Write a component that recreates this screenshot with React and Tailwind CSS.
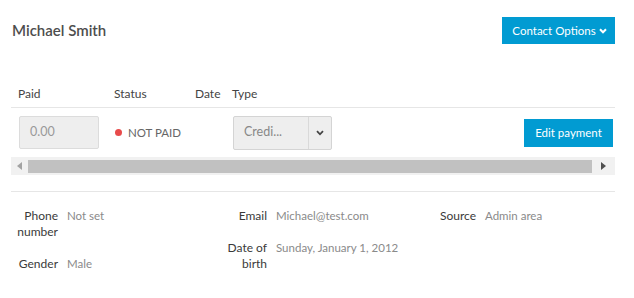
import React from 'react';

const font = { fontFamily: 'Lato, "Open Sans", sans-serif' };

function Detail({ label, value }) {
  return (
    <div className="flex mb-4 leading-4">
      <div className="w-[47px] shrink-0 text-right text-[12px] text-[#3a3a3a]">{label}</div>
      <div className="ml-[9px] text-[11.5px] text-[#8a8a8a]">{value}</div>
    </div>
  );
}

export default function App() {
  return (
    <div className="w-[634px] h-[298px] bg-white overflow-hidden pl-[11px] pr-[19px] pt-[17px]" style={font}>
      {/* header */}
      <div className="flex items-center justify-between h-[27px]">
        <h1 className="pl-[1px] text-[15px] font-semibold text-[#4d4d4d]">Michael Smith</h1>
        <button className="w-[113px] h-[27px] bg-[#019bd2] text-white text-[11.5px] flex items-center justify-center gap-[3px] pl-[2px]">
          Contact Options
          <svg width="8" height="6" viewBox="0 0 8 6"><path d="M1 1.2 L4 4.3 L7 1.2" stroke="white" strokeWidth="2" fill="none" /></svg>
        </button>
      </div>

      {/* table */}
      <div className="mt-[36px] text-[12px] text-[#444]">
        <div className="grid grid-cols-[95px_81px_37px_1fr] h-[28px] items-center border-b border-[#e6e6e6]">
          <div className="pl-[7px]">Paid</div>
          <div className="pl-[8px]">Status</div>
          <div className="pl-[8px]">Date</div>
          <div className="pl-[8px]">Type</div>
        </div>
        <div className="grid grid-cols-[95px_81px_37px_1fr] h-[49px] items-center">
          <div className="pl-[8px]">
            <div className="w-[80px] h-[33px] bg-[#eeeeee] border border-[#dcdcdc] rounded-[2px] flex items-center pl-[10px] text-[#999] text-[12.5px]">0.00</div>
          </div>
          <div className="pl-[9px] flex items-center gap-[6px] text-[#666] text-[11.5px]">
            <span className="w-[7px] h-[7px] rounded-full bg-[#e84b4b]" />
            <span className="whitespace-nowrap">NOT PAID</span>
          </div>
          <div />
          <div className="pl-[9px] flex items-center justify-between">
            <div className="w-[99px] h-[34px] bg-[#eeeeee] border border-[#d4d4d4] rounded-[2px] flex">
              <div className="flex-1 flex items-center pl-[10px] text-[#888] text-[12.5px]">Credi...</div>
              <div className="w-[23px] border-l border-[#d9d9d9] flex items-center justify-center">
                <svg width="8" height="6" viewBox="0 0 8 6"><path d="M1 1.2 L4 4.3 L7 1.2" stroke="#444" strokeWidth="1.8" fill="none" /></svg>
              </div>
            </div>
            <button className="mr-[2px] w-[89px] h-[28px] bg-[#019bd2] text-white text-[11.5px] mt-[1px]">Edit payment</button>
          </div>
        </div>

        {/* scrollbar */}
        <div className="h-[18px] bg-[#f1f1f1] flex items-center">
          <div className="w-[17px] flex justify-center">
            <svg width="5" height="8" viewBox="0 0 5 8"><path d="M5 0 L0 4 L5 8 Z" fill="#a3a3a3" /></svg>
          </div>
          <div className="flex-1 h-[13px] bg-[#c1c1c1]" />
          <div className="w-[23px] flex justify-center">
            <svg width="5" height="8" viewBox="0 0 5 8"><path d="M0 0 L5 4 L0 8 Z" fill="#505050" /></svg>
          </div>
        </div>
      </div>

      {/* details */}
      <div className="mt-[16px] border-t border-[#e6e6e6] pt-[16px] grid grid-cols-[209px_209px_1fr]">
        <div>
          <Detail label="Phone number" value="Not set" />
          <Detail label="Gender" value="Male" />
        </div>
        <div>
          <Detail label="Email" value="Michael@test.com" />
          <Detail label="Date of birth" value="Sunday, January 1, 2012" />
        </div>
        <div>
          <Detail label="Source" value="Admin area" />
        </div>
      </div>
    </div>
  );
}
